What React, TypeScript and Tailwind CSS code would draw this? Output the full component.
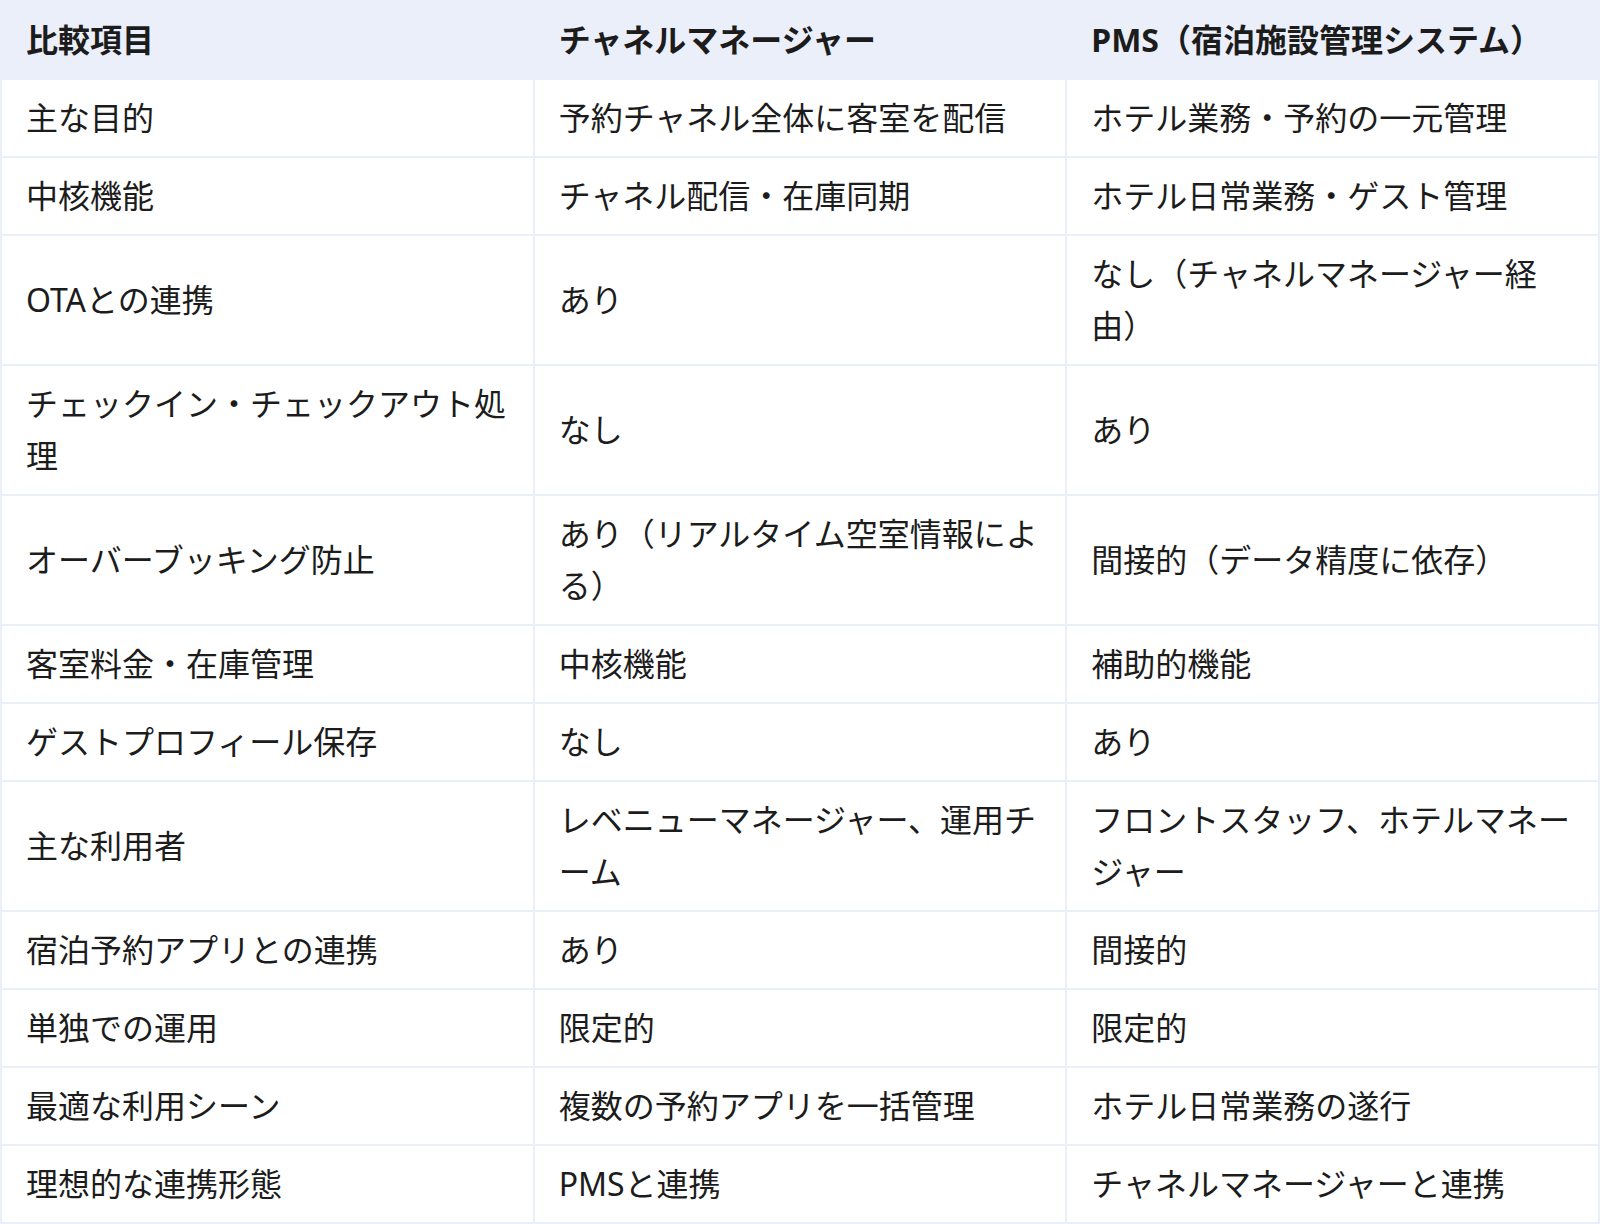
const rows: [string, string, string][] = [
  ["主な目的", "予約チャネル全体に客室を配信", "ホテル業務・予約の一元管理"],
  ["中核機能", "チャネル配信・在庫同期", "ホテル日常業務・ゲスト管理"],
  ["OTAとの連携", "あり", "なし（チャネルマネージャー経由）"],
  ["チェックイン・チェックアウト処理", "なし", "あり"],
  ["オーバーブッキング防止", "あり（リアルタイム空室情報による）", "間接的（データ精度に依存）"],
  ["客室料金・在庫管理", "中核機能", "補助的機能"],
  ["ゲストプロフィール保存", "なし", "あり"],
  ["主な利用者", "レベニューマネージャー、運用チーム", "フロントスタッフ、ホテルマネージャー"],
  ["宿泊予約アプリとの連携", "あり", "間接的"],
  ["単独での運用", "限定的", "限定的"],
  ["最適な利用シーン", "複数の予約アプリを一括管理", "ホテル日常業務の遂行"],
  ["理想的な連携形態", "PMSと連携", "チャネルマネージャーと連携"],
];

const headers = ["比較項目", "チャネルマネージャー", "PMS（宿泊施設管理システム）"];

export default function App() {
  return (
    <div
      className="w-[1600px] bg-white text-[#1c1c1c]"
      style={{ fontFamily: '"Noto Sans", "Noto Sans CJK JP", sans-serif' }}
    >
      <table className="w-full table-fixed border-collapse text-[32px] leading-[52px]">
        <thead>
          <tr className="bg-[#ebeffa]">
            {headers.map((h) => (
              <th
                key={h}
                className="border-2 border-[#ebeffa] px-6 py-3 text-left align-middle font-bold"
              >
                {h}
              </th>
            ))}
          </tr>
        </thead>
        <tbody>
          {rows.map((r) => (
            <tr key={r[0]}>
              {r.map((c, i) => (
                <td
                  key={i}
                  className="border-2 border-[#ebeffa] px-6 py-3 align-middle"
                >
                  {c}
                </td>
              ))}
            </tr>
          ))}
        </tbody>
      </table>
    </div>
  );
}
